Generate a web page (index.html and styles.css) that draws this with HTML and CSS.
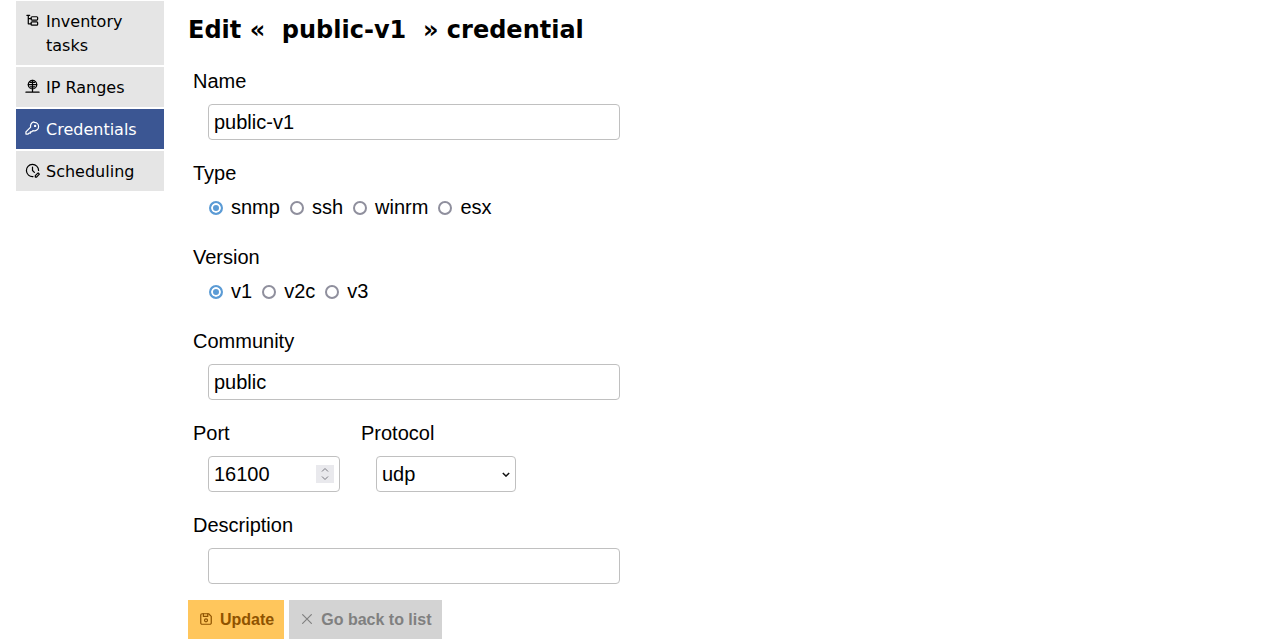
FILE: index.html
```html
<!DOCTYPE html>
<html lang="en">
<head>
    <meta charset="UTF-8">
    <title>Edit credential</title>
    <link rel="stylesheet" href="styles.css">
</head>
<body>
    <nav class="sidebar">
        <a class="nav-item" href="#">
            <svg class="nav-icon" viewBox="0 0 16 16"><path d="M2 2.500h3M3.500 2.500v9h3M3.500 6h3"/><rect x="6.500" y="4" width="7" height="3.500" rx="1"/><rect x="6.500" y="9.500" width="7" height="3.500" rx="1"/></svg>
            <span>Inventory tasks</span>
        </a>
        <a class="nav-item" href="#">
            <svg class="nav-icon" viewBox="0 0 16 16"><circle cx="8" cy="6" r="4.500"/><path d="M3.500 6h9M8 1.500v9M5.500 3.500h5M5.500 8.500h5M8 10.500v3.500M1 14h14"/></svg>
            <span>IP Ranges</span>
        </a>
        <a class="nav-item active" href="#">
            <svg class="nav-icon" viewBox="0 0 16 16"><path d="M10 1.500a4.500 4.500 0 0 1 4.500 4.500 4.500 4.500 0 0 1-6 4.200l-1.300 1.300h-1.500v1.500h-1.500l-.9.900h-2.300v-2.300l5-5a4.500 4.500 0 0 1 3.500-5.600z"/><circle cx="10.800" cy="5.200" r=".6"/></svg>
            <span>Credentials</span>
        </a>
        <a class="nav-item" href="#">
            <svg class="nav-icon" viewBox="0 0 16 16"><path d="M8.500 14.500a6.500 6.500 0 1 1 6-6.500"/><path d="M8 4.500v3.500l2 2"/><path d="M11 15v-1.500l3-3 1.300 1.300-3 3.200z"/></svg>
            <span>Scheduling</span>
        </a>
    </nav>

    <main class="content">
        <h1>Edit «&nbsp; public-v1 &nbsp;» credential</h1>
        <form>
            <div class="field">
                <label class="field-label" for="name">Name</label>
                <input class="text-input" type="text" id="name" value="public-v1">
            </div>
            <div class="field field-radios">
                <div class="field-label">Type</div>
                <div class="radios">
                    <label><input type="radio" name="type" checked> snmp</label>
                    <label><input type="radio" name="type"> ssh</label>
                    <label><input type="radio" name="type"> winrm</label>
                    <label><input type="radio" name="type"> esx</label>
                </div>
            </div>
            <div class="field field-radios">
                <div class="field-label">Version</div>
                <div class="radios">
                    <label><input type="radio" name="version" checked> v1</label>
                    <label><input type="radio" name="version"> v2c</label>
                    <label><input type="radio" name="version"> v3</label>
                </div>
            </div>
            <div class="field">
                <label class="field-label" for="community">Community</label>
                <input class="text-input" type="text" id="community" value="public">
            </div>
            <div class="field-row">
                <div class="field">
                    <label class="field-label" for="port">Port</label>
                    <div class="input-wrap port-wrap">
                        <input class="text-input port-input" type="number" id="port" value="16100">
                        <span class="spinner">
                            <svg viewBox="0 0 18 18"><path d="M6 6.500l3-3 3 3M6 11.500l3 3 3-3"/></svg>
                        </span>
                    </div>
                </div>
                <div class="field">
                    <label class="field-label" for="protocol">Protocol</label>
                    <div class="input-wrap select-wrap">
                        <select class="text-input protocol-select" id="protocol">
                            <option>udp</option>
                            <option>tcp</option>
                        </select>
                        <svg class="select-arrow" viewBox="0 0 10 6"><path d="M1 1l4 4 4-4"/></svg>
                    </div>
                </div>
            </div>
            <div class="field field-last">
                <label class="field-label" for="description">Description</label>
                <input class="text-input" type="text" id="description">
            </div>
            <div class="buttons">
                <button class="btn btn-update" type="submit">
                    <svg class="btn-icon" viewBox="0 0 16 16"><path d="M3.500 2h7.500l3 3v7.500a1.500 1.500 0 0 1-1.500 1.500h-9a1.500 1.500 0 0 1-1.500-1.500v-9a1.500 1.500 0 0 1 1.500-1.500z"/><circle cx="8" cy="9.500" r="1.700"/><path d="M5 2v3h5v-3"/></svg>
                    Update
                </button>
                <button class="btn btn-back" type="button">
                    <svg class="btn-icon" viewBox="0 0 16 16"><path d="M3 3l10 10M13 3l-10 10"/></svg>
                    Go back to list
                </button>
            </div>
        </form>
    </main>
</body>
</html>
```

FILE: styles.css
```css
* {
    box-sizing: border-box;
}
body {
    margin: 0;
    padding: 1px 0 0 16px;
    display: flex;
    background-color: #fff;
    color: #000;
    font-family: "Liberation Sans", Arial, sans-serif;
    font-size: 20px;
    overflow: hidden;
}
.sidebar {
    width: 148px;
    flex-shrink: 0;
    display: flex;
    flex-direction: column;
    gap: 2px;
    font-family: "DejaVu Sans", sans-serif;
    font-size: 16px;
    line-height: 24px;
}
.nav-item {
    display: flex;
    gap: 6px;
    padding: 9px 10px 7px 9px;
    background-color: #e5e5e5;
    color: #000;
    text-decoration: none;
}
.nav-item.active {
    background-color: #3b5693;
    color: #fff;
}
.nav-icon {
    width: 15px;
    height: 15px;
    flex-shrink: 0;
    margin-top: 3px;
    fill: none;
    stroke: currentColor;
    stroke-width: 1.300;
    stroke-linecap: round;
    stroke-linejoin: round;
}
.content {
    margin-left: 24px;
    flex-grow: 1;
}
h1 {
    margin: 14px 0 24px;
    font-family: "DejaVu Sans", sans-serif;
    font-size: 24px;
    line-height: 30px;
    font-weight: bold;
}
.field {
    padding-left: 5px;
    margin-bottom: 21px;
}
.field-label {
    display: block;
    line-height: 24px;
    margin-bottom: 11px;
}
.text-input {
    display: block;
    width: 412px;
    height: 36px;
    margin-left: 15px;
    padding: 0 5px;
    border: 1px solid #c0c0c0;
    border-radius: 4px;
    background-color: #fff;
    color: #000;
    font-family: "Liberation Sans", Arial, sans-serif;
    font-size: 20px;
}
.field-radios {
    margin-bottom: 26px;
}
.field-radios .field-label {
    margin-bottom: 9px;
}
.radios {
    display: flex;
    gap: 10px;
    margin-left: 16px;
    height: 25px;
    line-height: 24px;
}
.radios label {
    display: flex;
    align-items: center;
    gap: 8px;
}
.radios input {
    appearance: none;
    width: 14px;
    height: 14px;
    margin: 2px 0 0;
    border: 2px solid #8f8f9d;
    border-radius: 50%;
    background-color: #fff;
}
.radios input:checked {
    border-color: #5b9bd5;
    background-color: #5b9bd5;
    box-shadow: inset 0 0 0 2px #fff;
}
.field-row {
    display: flex;
    gap: 16px;
}
.input-wrap {
    position: relative;
}
.port-input {
    width: 132px;
    appearance: textfield;
}
.port-input::-webkit-inner-spin-button {
    display: none;
}
.spinner {
    position: absolute;
    left: 123px;
    top: 9px;
    width: 18px;
    height: 18px;
    background-color: #e9e9ed;
}
.spinner svg {
    display: block;
    fill: none;
    stroke: #77777f;
    stroke-width: 1;
}
.protocol-select {
    width: 140px;
    appearance: none;
}
.select-arrow {
    position: absolute;
    left: 141px;
    top: 16px;
    width: 8px;
    height: 5px;
    fill: none;
    stroke: #111;
    stroke-width: 1.800;
}
.field-last {
    margin-bottom: 16px;
}
.buttons {
    display: flex;
    gap: 5px;
}
.btn {
    display: flex;
    align-items: center;
    gap: 8px;
    height: 39px;
    padding: 0 10px;
    border: none;
    font-family: "Liberation Sans", Arial, sans-serif;
    font-size: 16px;
    font-weight: bold;
}
.btn-update {
    background-color: #ffc65c;
    color: #8f5300;
}
.btn-back {
    padding-right: 11px;
    background-color: #d3d3d3;
    color: #808080;
}
.btn-icon {
    width: 14px;
    height: 14px;
    margin: 0 0 2px 1px;
    margin-right: -1px;
    fill: none;
    stroke: currentColor;
    stroke-width: 1.400;
    stroke-linecap: round;
    stroke-linejoin: round;
}
```
